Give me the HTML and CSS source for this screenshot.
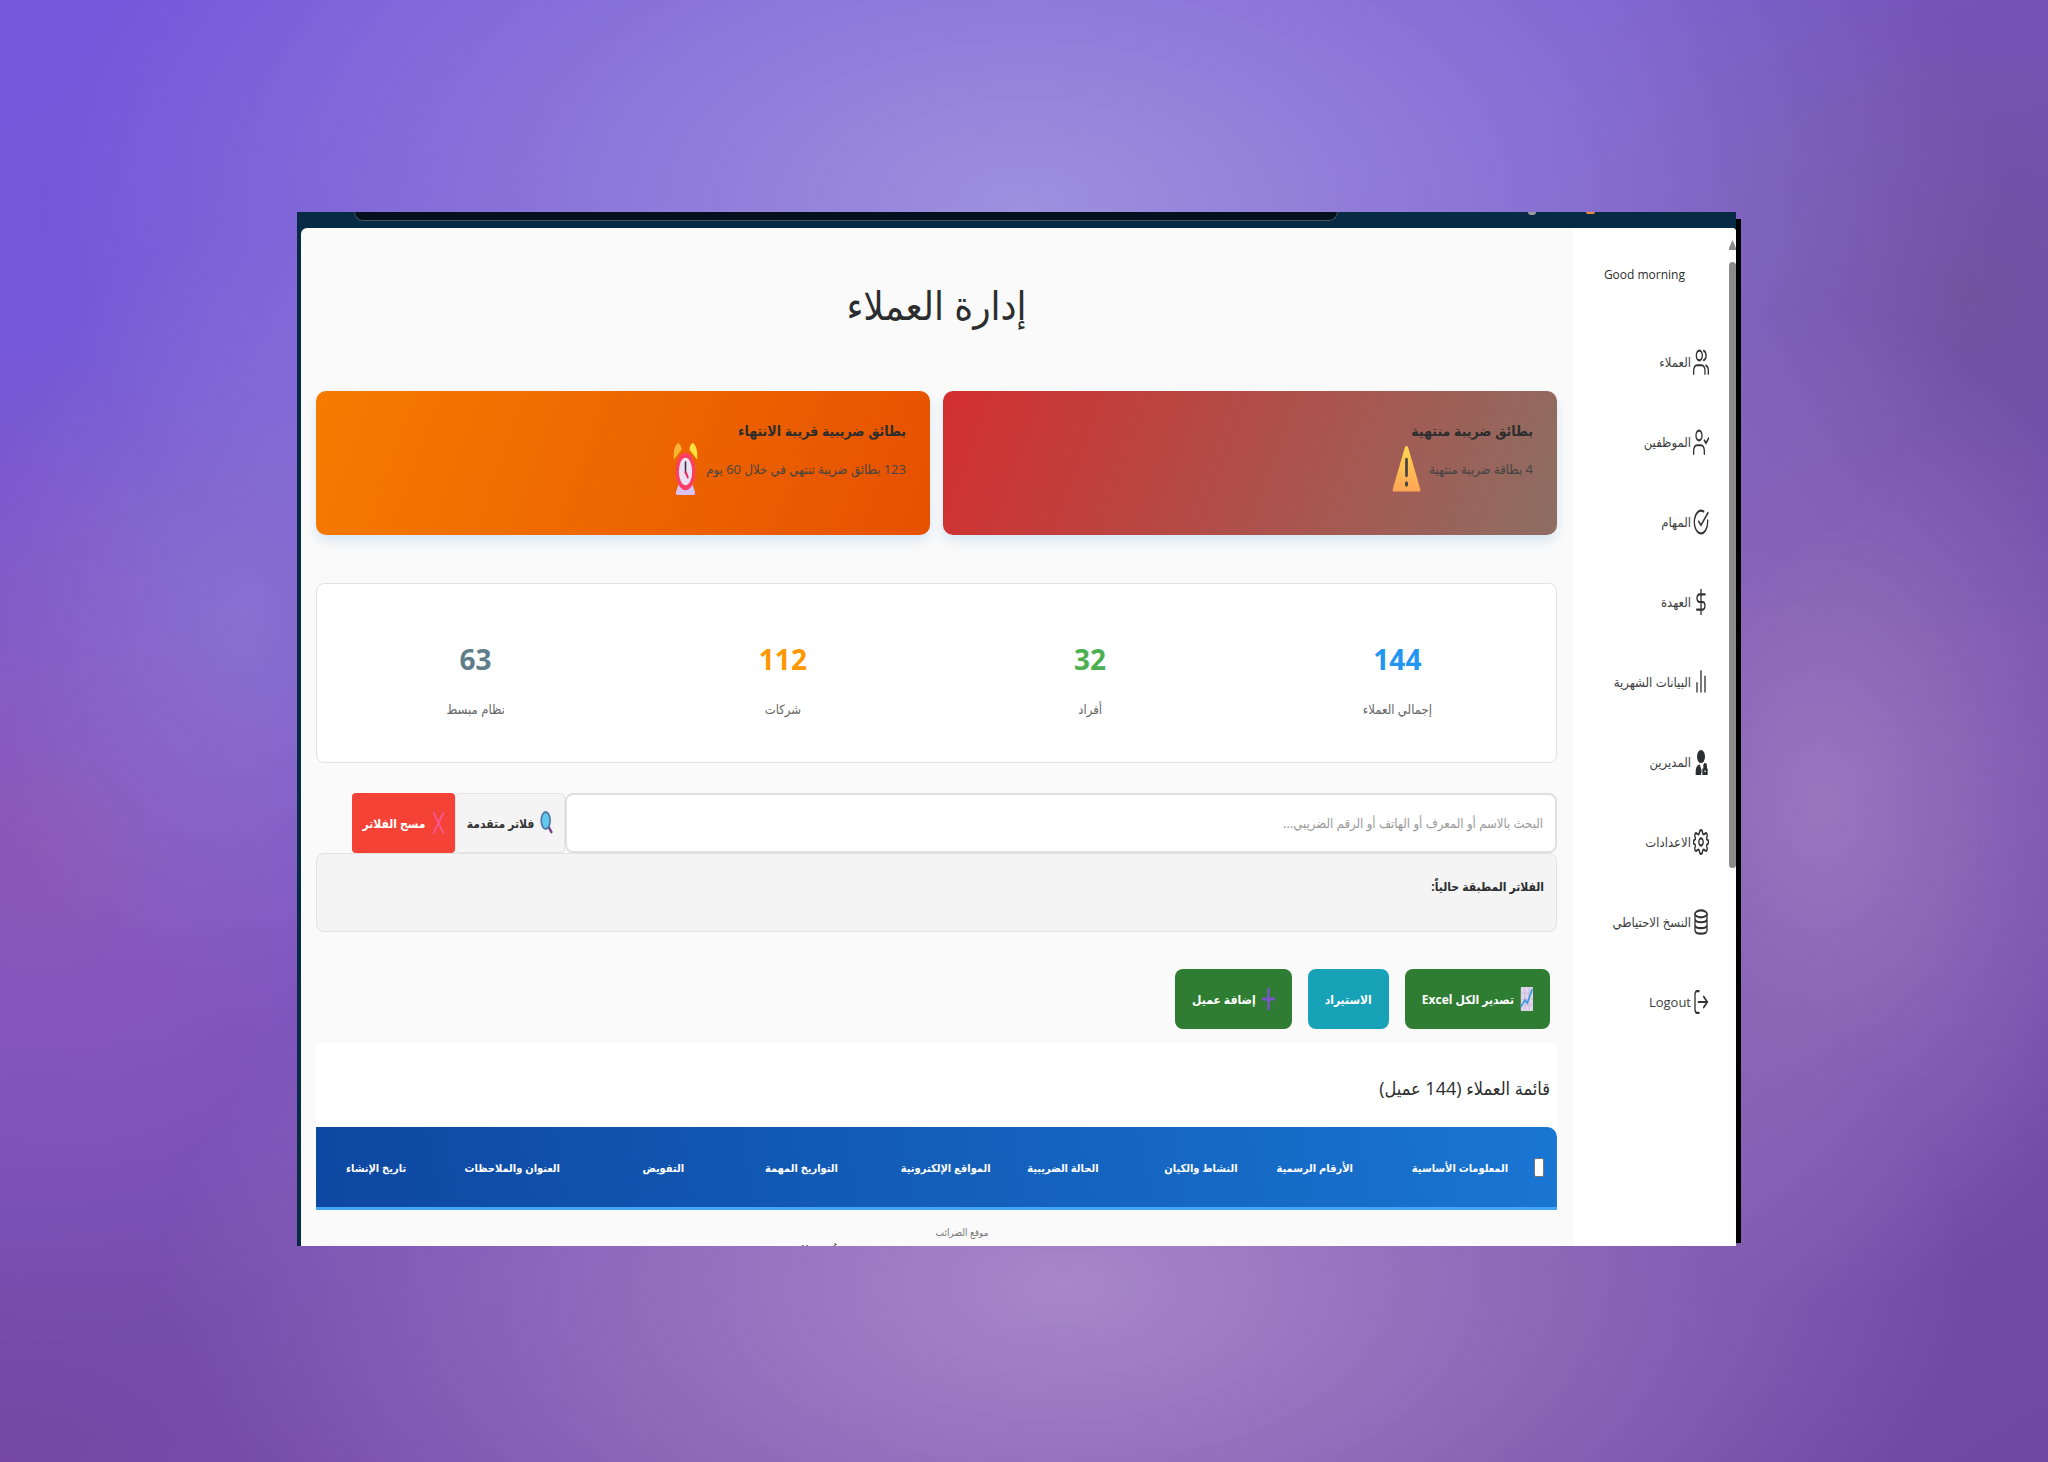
FILE: index.html
```html
<!DOCTYPE html>
<html lang="ar" dir="rtl">
<head>
<meta charset="utf-8">
<title>إدارة العملاء</title>
<link rel="stylesheet" href="styles.css">
</head>
<body>
<div class="window">
  <div class="chrome">
    <div class="address"></div>
    <div class="chrome-dots"><span class="dot-gray"></span><span class="dot-orange"></span></div>
  </div>
  <div class="app">
    <div class="scrollbar">
      <svg class="scroll-up" viewBox="0 0 8 10" preserveAspectRatio="none"><path d="M4 0 8 8V10H0V8Z" fill="#8b8b8b"/></svg>
      <div class="thumb"></div>
    </div>
    <nav class="sidebar">
      <p class="greeting" dir="ltr">Good morning</p>
      <ul class="menu">
        <li><a href="#"><svg class="icon" viewBox="0 0 24 24" preserveAspectRatio="none"><circle cx="9.500" cy="6" r="4.500"/><path d="M1 23v-3a5 5 0 0 1 5-5h7a5 5 0 0 1 5 5v3M16 1.600a4.500 4.500 0 0 1 0 8.800M19.500 15.200A5 5 0 0 1 23 20v3"/></svg>العملاء</a></li>
        <li><a href="#"><svg class="icon" viewBox="0 0 24 24" preserveAspectRatio="none"><circle cx="9" cy="6" r="4.500"/><path d="M1 23v-3a5 5 0 0 1 5-5h6a5 5 0 0 1 5 5v3M17 10.500l2.500 2.500L23.500 8.500"/></svg>الموظفين</a></li>
        <li><a href="#"><svg class="icon" viewBox="0 0 24 24" preserveAspectRatio="none"><path d="M22 10.500V12a10 10.500 0 1 1-6-9.600M22.500 3.500 12 15l-3.500-3.500"/></svg>المهام</a></li>
        <li><a href="#"><svg class="icon" viewBox="0 0 24 24" preserveAspectRatio="none"><path d="M12 0v24M18 5H9.500a3.500 3.500 0 0 0 0 7h5a3.500 3.500 0 0 1 0 7H5.500"/></svg>العهدة</a></li>
        <li><a href="#"><svg class="icon" viewBox="0 0 24 24" preserveAspectRatio="none"><path d="M6 21v-8M12 21V2M18 21V7"/></svg>البيانات الشهرية</a></li>
        <li><a href="#"><svg class="icon" viewBox="0 0 24 24" preserveAspectRatio="none"><g fill="#2b2d2e" stroke="none"><circle cx="12" cy="7" r="6"/><path d="M4 24v-3q0-6 6-7l3 6-1 4zM14 24v-6h1.500v-2a2.700 3 0 0 1 5.400 0v2H22v6z"/></g><circle cx="18.200" cy="20.500" r="1" fill="#fff" stroke="none"/></svg>المديرين</a></li>
        <li><a href="#"><svg class="icon" viewBox="0 0 24 24" preserveAspectRatio="none"><circle cx="12" cy="12" r="3.300"/><path d="M9.500 4C10 0 14 0 14.500 4q1 1.500 3 .500c3-2 5 1 3 3.500q-.5 1.500 1 2c2.500.5 2.500 3.500 0 4q-1.500.5-1 2c2 2.500 0 5.500-3 3.500q-2-1-3 .500c-.5 4-4.500 4-5 0q-1-1.500-3-.500c-3 2-5-1-3-3.500q.5-1.500-1-2c-2.500-.5-2.500-3.500 0-4q1.500-.5 1-2c-2-2.500 0-5.500 3-3.500q2 1 3-.500z"/></svg>الاعدادات</a></li>
        <li><a href="#"><svg class="icon" viewBox="0 0 24 24" preserveAspectRatio="none"><ellipse cx="12" cy="4.500" rx="9" ry="3.200"/><path d="M3 4.500v15c0 4.300 18 4.300 18 0v-15M3 9c0 4.300 18 4.300 18 0M3 14.500c0 4.300 18 4.300 18 0"/></svg>النسخ الاحتياطي</a></li>
        <li><a href="#"><svg class="icon" viewBox="0 0 24 24" preserveAspectRatio="none"><path d="M9 2H6a3 3 0 0 0-3 3v14a3 3 0 0 0 3 3h3M8 12h13M16 7l5.500 5-5.500 5"/></svg>Logout</a></li>
      </ul>
    </nav>
    <main class="content">
      <h1>إدارة العملاء</h1>
      <section class="alerts">
        <article class="alert expired">
          <h2>بطائق ضريبة منتهية</h2>
          <p>4 بطاقة ضريبة منتهية
            <svg class="emoji" viewBox="0 0 32 32" preserveAspectRatio="none"><defs><linearGradient id="warn" x1="0" y1="0" x2="0" y2="1"><stop offset="0" stop-color="#ffd750"/><stop offset="1" stop-color="#ffa556"/></linearGradient></defs><path d="M14 2q2-3 4 0l13 27q1 2-1 2H2q-2 0-1-2z" fill="url(#warn)"/><path d="M16 10v10" stroke="#444" stroke-width="3" stroke-linecap="round"/><circle cx="16" cy="26" r="1.800" fill="#444"/></svg>
          </p>
        </article>
        <article class="alert soon">
          <h2>بطائق ضريبية قريبة الانتهاء</h2>
          <p>123 بطائق ضريبة تنتهي في خلال 60 يوم
            <svg class="emoji clock" viewBox="0 0 32 32" preserveAspectRatio="none"><path d="M8 24h16l4 6q1 2-2 2H6q-3 0-2-2z" fill="#d9c3f2"/><path d="M1 9Q0 3 6 0q4 0 5 4L3 9Q1 11 1 9z" fill="#f6b532"/><path d="M31 9Q32 3 26 0q-4 0-5 4l8 5q2 2 2 0z" fill="#ffe03d"/><ellipse cx="16" cy="17.500" rx="12.500" ry="11.500" fill="#fb3e66"/><ellipse cx="16" cy="17.500" rx="8.500" ry="8.500" fill="#e9e2f0"/><path d="M16 12v6" stroke="#3a2b45" stroke-width="2" stroke-linecap="round"/><path d="m16 18 3 3" stroke="#f3245a" stroke-width="2" stroke-linecap="round"/></svg>
          </p>
        </article>
      </section>
      <section class="stats">
        <div class="stat"><strong class="blue">144</strong><span>إجمالي العملاء</span></div>
        <div class="stat"><strong class="green">32</strong><span>أفراد</span></div>
        <div class="stat"><strong class="orange">112</strong><span>شركات</span></div>
        <div class="stat"><strong class="slate">63</strong><span>نظام مبسط</span></div>
      </section>
      <form class="search">
        <input class="search-box" type="text" aria-label="البحث" placeholder="البحث بالاسم أو المعرف أو الهاتف أو الرقم الضريبي...">
        <button class="btn-filter" type="button"><svg class="mini" viewBox="0 0 16 24" preserveAspectRatio="none"><path d="m10 15 4 6" stroke="#7d4588" stroke-width="3" stroke-linecap="round"/><ellipse cx="7" cy="9.500" rx="5.500" ry="8.500" fill="#62c8ec" stroke="#4f77a8" stroke-width="2"/></svg>فلاتر متقدمة</button>
        <button class="btn-clear" type="button"><svg class="mini" viewBox="0 0 16 24" preserveAspectRatio="none"><path d="M2 2l12 20M14 2 2 22" stroke="#f8589c" stroke-width="2" stroke-linecap="round"/></svg>مسح الفلاتر</button>
      </form>
      <section class="applied"><strong>الفلاتر المطبقة حالياً:</strong></section>
      <div class="actions">
        <button class="btn green-btn" type="button"><svg class="mini" viewBox="0 0 16 24" preserveAspectRatio="none"><rect x="1" width="15" height="24" rx="1" fill="#e2d5ec"/><path d="M6 0v24M11 0v24M1 6h15M1 12h15M1 18h15" stroke="#cbbbdc"/><path d="m1 20 5-7 3 3 6-14" fill="none" stroke="#3d9be0" stroke-width="2"/></svg>تصدير الكل Excel</button>
        <button class="btn teal-btn" type="button">الاستيراد</button>
        <button class="btn green-btn" type="button"><svg class="mini" viewBox="0 0 16 24" preserveAspectRatio="none"><path d="M8 2v20M1 12h14" stroke="#7b55c7" stroke-width="3" stroke-linecap="round"/></svg>إضافة عميل</button>
      </div>
      <section class="list">
        <h2>قائمة العملاء (144 عميل)</h2>
        <table>
          <colgroup><col class="c-check"><col class="c-info"><col class="c-numbers"><col class="c-activity"><col class="c-tax"><col class="c-sites"><col class="c-dates"><col class="c-auth"><col class="c-address"><col class="c-created"></colgroup>
          <thead><tr>
            <th><input type="checkbox" aria-label="تحديد الكل"></th>
            <th>المعلومات الأساسية</th><th>الأرقام الرسمية</th><th>النشاط والكيان</th><th>الحالة الضريبية</th><th>المواقع الإلكترونية</th><th>التواريخ المهمة</th><th>التفويض</th><th>العنوان والملاحظات</th><th>تاريخ الإنشاء</th>
          </tr></thead>
          <tbody><tr>
            <td></td><td></td><td></td><td></td><td></td><td>موقع الضرائب</td><td class="date-cell">غير محدد</td><td></td><td></td><td></td>
          </tr></tbody>
        </table>
      </section>
    </main>
  </div>
</div>
</body>
</html>
```
FILE: styles.css
```css
* { box-sizing: border-box; }

body {
  margin: 0;
  height: 100vh;
  padding: 212px 312px 216px 297px;
  display: flex;
  color: #2b2d2e;
  font-family: "Open Sans", "DejaVu Sans Condensed", "DejaVu Sans", sans-serif;
  font-size: 14px;
  background:
    radial-gradient(ellipse 48% 38% at 50% 14%, #9d90de 0%, #9d90de00 100%),
    radial-gradient(ellipse 44% 34% at 52% 88%, #a886c8 0%, #a886c800 100%),
    radial-gradient(ellipse 16% 34% at 89% 55%, #9a76be 0%, #9a76be00 100%),
    radial-gradient(ellipse 14% 26% at 12% 42%, #8f7ed6a0 0%, #8f7ed600 100%),
    radial-gradient(ellipse 22% 34% at 96% 20%, #6f52a0 0%, #6f52a000 100%),
    radial-gradient(ellipse 26% 34% at 2% 58%, #8c58b8 0%, #8c58b800 100%),
    radial-gradient(ellipse 50% 40% at 0% 100%, #7448a4 0%, #7448a400 100%),
    linear-gradient(150deg, #7458dc 0%, #7656cf 35%, #7a50b0 70%, #6e48a2 100%);
}

h1, h2, p, ul { margin: 0; padding: 0; font-weight: 400; }
button, input { font: inherit; margin: 0; }

.window {
  flex: 1;
  min-width: 0;
  display: flex;
  flex-direction: column;
  background: #072a45;
  box-shadow: 10px 2px 0 -5px #000;
}

.chrome {
  flex: none;
  height: 16px;
  display: flex;
  direction: ltr;
  padding-left: 57px;
}
.address {
  flex: none;
  width: 984px;
  height: 9px;
  background: #04111d;
  border: 1px solid #4b5660;
  border-top: 0;
  border-radius: 0 0 10px 10px;
}
.chrome-dots { display: flex; gap: 50px; padding-left: 190px; }
.dot-gray { width: 8px; height: 3px; background: #a09a98; border-radius: 0 0 4px 4px; }
.dot-orange { width: 9px; height: 2px; background: #f08a3c; border-radius: 0 0 2px 2px; }

.app {
  flex: 1;
  min-height: 0;
  display: flex;
  margin-left: 4px;
  overflow: hidden;
  background: #fafafa;
  border-radius: 6px 4px 0 0;
}
.scrollbar { width: 7px; padding-top: 12px; background: #fcfcfc; }
.scroll-up { display: block; width: 7px; height: 10px; margin-bottom: 12px; }
.thumb { height: 606px; background: #8b8b8b; border-radius: 4px; }

.sidebar { width: 156px; background: #fff; padding-right: 20px; }
.greeting { padding: 34px 24px 0 0; line-height: 26px; font-size: 12px; text-align: right; }
.menu { list-style: none; padding-top: 34px; font-size: 13px; }
.menu a {
  height: 80px;
  display: flex;
  align-items: center;
  gap: 2px;
  color: #3c3e40;
  text-decoration: none;
  white-space: nowrap;
}
.icon {
  flex: none;
  width: 16px;
  height: 26px;
  fill: none;
  stroke: #333;
  stroke-width: 2;
  stroke-linecap: round;
}

.content { flex: 1; min-width: 0; padding: 30px 16px 0 15px; }
h1 { height: 133px; line-height: 94px; font-size: 40px; text-align: center; }

.alerts { display: grid; grid-template-columns: 1fr 1fr; gap: 13px; }
.alert { height: 144px; padding: 24px; border-radius: 10px; box-shadow: 0 6px 12px #1976d226; }
.alert h2 { font-size: 14px; font-weight: 700; line-height: 32px; }
.alert p { height: 44px; display: flex; align-items: center; gap: 8px; color: #444; font-size: 13px; }
.expired { background: linear-gradient(110deg, #d32f2f, #8d6e63); }
.soon { background: linear-gradient(110deg, #f57c00, #e65100); }
.emoji { width: 29px; height: 48px; }
.clock { width: 25px; height: 52px; }

.stats {
  height: 180px;
  margin-top: 48px;
  padding: 44px 5px 0;
  display: grid;
  grid-template-columns: repeat(4, 1fr);
  background: #fff;
  border: 1px solid #e2e2e2;
  border-radius: 8px;
}
.stat { display: flex; flex-direction: column; align-items: center; color: #666; font-size: 13px; }
.stat strong { font-size: 28px; line-height: 62px; }
.stat span { line-height: 38px; }
.stat .blue { color: #2196f3; }
.stat .green { color: #4caf50; }
.stat .orange { color: #ff9800; }
.stat .slate { color: #607d8b; }

.search { display: flex; margin-top: 30px; padding-left: 36px; }
.search-box {
  flex: 1;
  min-width: 0;
  height: 60px;
  padding: 0 12px;
  background: #fff;
  border: 2px solid #e0e0e0;
  border-radius: 8px;
  font-size: 13px;
}
.search-box::placeholder { color: #9a9a9a; opacity: 1; }
.btn-filter, .btn-clear {
  display: flex;
  align-items: center;
  justify-content: center;
  gap: 6px;
  padding: 0;
  font-weight: 700;
  white-space: nowrap;
  font-size: 12px;
}
.btn-filter { width: 110px; background: #f4f4f4; border: 1px solid #e4e4e4; border-radius: 4px; color: #333; }
.btn-clear { width: 103px; background: #f44336; border: 0; border-radius: 4px; color: #fff; }
.mini { flex: none; width: 13px; height: 24px; fill: none; }

.applied {
  height: 79px;
  padding: 17px 12px;
  line-height: 32px;
  font-size: 12px;
  background: #f4f4f4;
  border: 1px solid #e2e2e2;
  border-radius: 8px;
}

.actions { display: flex; gap: 16px; margin: 37px 7px 14px; }
.btn {
  height: 60px;
  padding: 0 17px;
  display: flex;
  align-items: center;
  gap: 6px;
  border: 0;
  border-radius: 8px;
  color: #fff;
  font-weight: 700;
  font-size: 12px;
}
.green-btn { background: #2e7d32; }
.teal-btn { background: #17a2b8; }

.list h2 { height: 84px; padding-right: 7px; line-height: 90px; font-size: 18px; background: #fff; }
table { width: 100%; table-layout: fixed; border-collapse: separate; border-spacing: 0; }
thead tr { background: linear-gradient(260deg, #1976d2, #0d47a1); }
thead th {
  height: 83px;
  padding: 0 8px 0 0;
  border-bottom: 3px solid #42a5f5;
  color: #fff;
  text-align: right;
  font-size: 11px;
  white-space: nowrap;
}
thead tr, thead th:first-child { border-top-right-radius: 10px; }
thead th:first-child { padding-right: 13px; }
th input {
  appearance: none;
  display: block;
  width: 10px;
  height: 19px;
  background: #fff;
  border: 1px solid #767676;
  border-radius: 2px;
}
td { padding: 8px 10px 0 0; vertical-align: top; font-size: 10px; line-height: 28px; color: #777; white-space: nowrap; }
.date-cell { padding-top: 22px; padding-right: 8px; font-size: 11px; color: #222; }
.c-check { width: 3.3%; }
.c-info { width: 12.5%; }
.c-numbers { width: 9.3%; }
.c-activity { width: 11.2%; }
.c-tax { width: 8.7%; }
.c-sites { width: 12.3%; }
.c-dates { width: 12.4%; }
.c-auth { width: 10%; }
.c-address { width: 12.4%; }
.c-created { width: 7.9%; }
```
